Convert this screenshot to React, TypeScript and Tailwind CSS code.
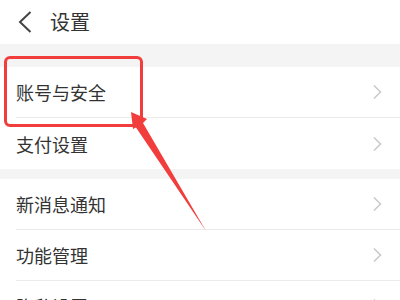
import React from "react";

const rows1 = ["账号与安全", "支付设置"];
const rows2 = ["新消息通知", "功能管理", "隐私设置"];

function Chevron() {
  return (
    <svg width="10" height="16" viewBox="0 0 10 16" className="shrink-0">
      <path d="M2 1.5 L8.5 8 L2 14.5" fill="none" stroke="#c8c8c8" strokeWidth="1.5" />
    </svg>
  );
}

function Row({ label, last }: { label: string; last?: boolean }) {
  return (
    <div className="bg-white pl-4">
      <div
        className={`h-[51px] flex items-center justify-between pr-[18px] ${
          last ? "" : "border-b border-[#ececec]"
        }`}
      >
        <span className="text-[18px] text-[#333] leading-none">{label}</span>
        <Chevron />
      </div>
    </div>
  );
}

export default function App() {
  return (
    <div
      className="relative w-[400px] h-[300px] overflow-hidden bg-[#f4f4f4]"
      style={{ fontFamily: '"Noto Sans CJK SC", "Noto Sans", sans-serif' }}
    >
      <div className="h-[44px] bg-white flex items-center pl-[18px]">
        <svg width="14" height="22" viewBox="0 0 14 22">
          <path d="M12.5 1 L2 11 L12.5 21" fill="none" stroke="#444" strokeWidth="2" />
        </svg>
        <span className="ml-[18px] text-[20px] text-[#333] leading-none">设置</span>
      </div>
      <div className="h-[23px]" />
      {rows1.map((r, i) => (
        <Row key={r} label={r} last={i === rows1.length - 1} />
      ))}
      <div className="h-[10px]" />
      {rows2.map((r) => (
        <Row key={r} label={r} />
      ))}

      <div className="absolute left-[4px] top-[56px] w-[139px] h-[71px] border-[3px] border-[#f23d3d] rounded-[6px]" />
      <svg className="absolute left-0 top-0" width="400" height="300" viewBox="0 0 400 300">
        <polygon
          points="131,112 147,119 143,123 206,231 136,127.5 133,129"
          fill="#f23d3d"
        />
      </svg>
    </div>
  );
}
